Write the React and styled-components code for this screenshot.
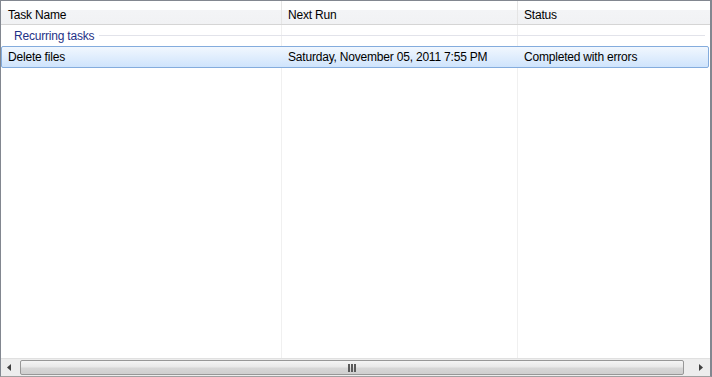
import styled, { createGlobalStyle } from "styled-components";

const Global = createGlobalStyle`
  html, body { margin: 0; padding: 0; background: #fff; }
  body {
    font-family: "Segoe UI", "Liberation Sans", Arial, sans-serif;
    font-size: 12px;
    letter-spacing: -0.2px;
  }
`;

const Frame = styled.div`
  width: 712px;
  height: 377px;
  box-sizing: border-box;
  border: 1px solid #828790;
  border-right-width: 2px;
  border-bottom: 1px solid #a0a0a0;
  display: flex;
  flex-direction: column;
  background: #fff;
  color: #000;
`;

const Columns = "281px 236px 1fr";

const Header = styled.div`
  display: grid;
  grid-template-columns: ${Columns};
  height: 23px;
  background: linear-gradient(#ffffff 0%, #ffffff 40%, #f3f4f6 41%, #f1f2f4 100%);
  border-bottom: 1px solid #d5d5d5;
`;

const HeaderCell = styled.div`
  display: flex;
  align-items: center;
  padding-left: ${p => p.$pad}px;
  padding-top: 4px;
  box-sizing: border-box;
  border-right: 1px solid ${p => (p.$last ? "transparent" : "#e5e5e5")};
  white-space: nowrap;
`;

const Body = styled.div`
  flex: 1;
  position: relative;
  display: flex;
  flex-direction: column;
`;

const Guides = styled.div`
  position: absolute;
  inset: 0;
  display: grid;
  grid-template-columns: ${Columns};
  pointer-events: none;
`;

const Guide = styled.div`
  border-right: 1px solid ${p => (p.$last ? "transparent" : "#f0f0f0")};
`;

const Group = styled.div`
  position: relative;
  height: 21px;
  display: flex;
  align-items: center;
  padding: 0 4px 0 13px;
  gap: 5px;
  color: #1e3287;
`;

const GroupLine = styled.div`
  flex: 1;
  height: 1px;
  background: #e2e3ea;
  margin-right: 1px;
`;

const Row = styled.div`
  position: relative;
  display: grid;
  grid-template-columns: ${Columns};
  height: 20px;
  margin: 0 1px 0 0;
  border: 1px solid #84acdd;
  border-radius: 2px;
  background: linear-gradient(#f1f7fe, #cfe4fc);
`;

const Cell = styled.div`
  display: flex;
  align-items: center;
  padding-left: ${p => p.$pad}px;
  white-space: nowrap;
`;

const Scroll = styled.div`
  height: 17px;
  display: flex;
  align-items: stretch;
  background: #ededed;
  border-top: 1px solid #e0e0e0;
`;

const Arrow = styled.div`
  width: 17px;
  display: flex;
  align-items: center;
  justify-content: center;
`;

const Thumb = styled.div`
  flex: 1;
  margin: 1px 9px 1px 2px;
  border: 1px solid #979797;
  border-radius: 2px;
  background: linear-gradient(#f4f4f4 0%, #e8e8e8 45%, #d6d6d6 55%, #cfcfcf 100%);
  display: flex;
  align-items: center;
  justify-content: center;
`;

const Arrowhead = ({ dir }) => (
  <svg width="5" height="7" viewBox="0 0 5 7">
    {dir === "left" ? (
      <path d="M4 0 L0 3.5 L4 7 Z" fill="#404040" />
    ) : (
      <path d="M0 0 L4 3.5 L0 7 Z" fill="#404040" />
    )}
  </svg>
);

const Grip = () => (
  <svg width="8" height="8" viewBox="0 0 8 8">
    <rect x="0" y="0" width="2" height="8" fill="#5a5a5a" />
    <rect x="3" y="0" width="2" height="8" fill="#5a5a5a" />
    <rect x="6" y="0" width="2" height="8" fill="#5a5a5a" />
  </svg>
);

export default function App() {
  return (
    <>
      <Global />
      <Frame>
        <Header>
          <HeaderCell $pad={7}>Task Name</HeaderCell>
          <HeaderCell $pad={6}>Next Run</HeaderCell>
          <HeaderCell $pad={6} $last>Status</HeaderCell>
        </Header>
        <Body>
          <Guides>
            <Guide />
            <Guide />
            <Guide $last />
          </Guides>
          <Group>
            Recurring tasks
            <GroupLine />
          </Group>
          <Row>
            <Cell $pad={6}>Delete files</Cell>
            <Cell $pad={5}>Saturday, November 05, 2011 7:55 PM</Cell>
            <Cell $pad={5}>Completed with errors</Cell>
          </Row>
        </Body>
        <Scroll>
          <Arrow>
            <Arrowhead dir="left" />
          </Arrow>
          <Thumb>
            <Grip />
          </Thumb>
          <Arrow>
            <Arrowhead dir="right" />
          </Arrow>
        </Scroll>
      </Frame>
    </>
  );
}
